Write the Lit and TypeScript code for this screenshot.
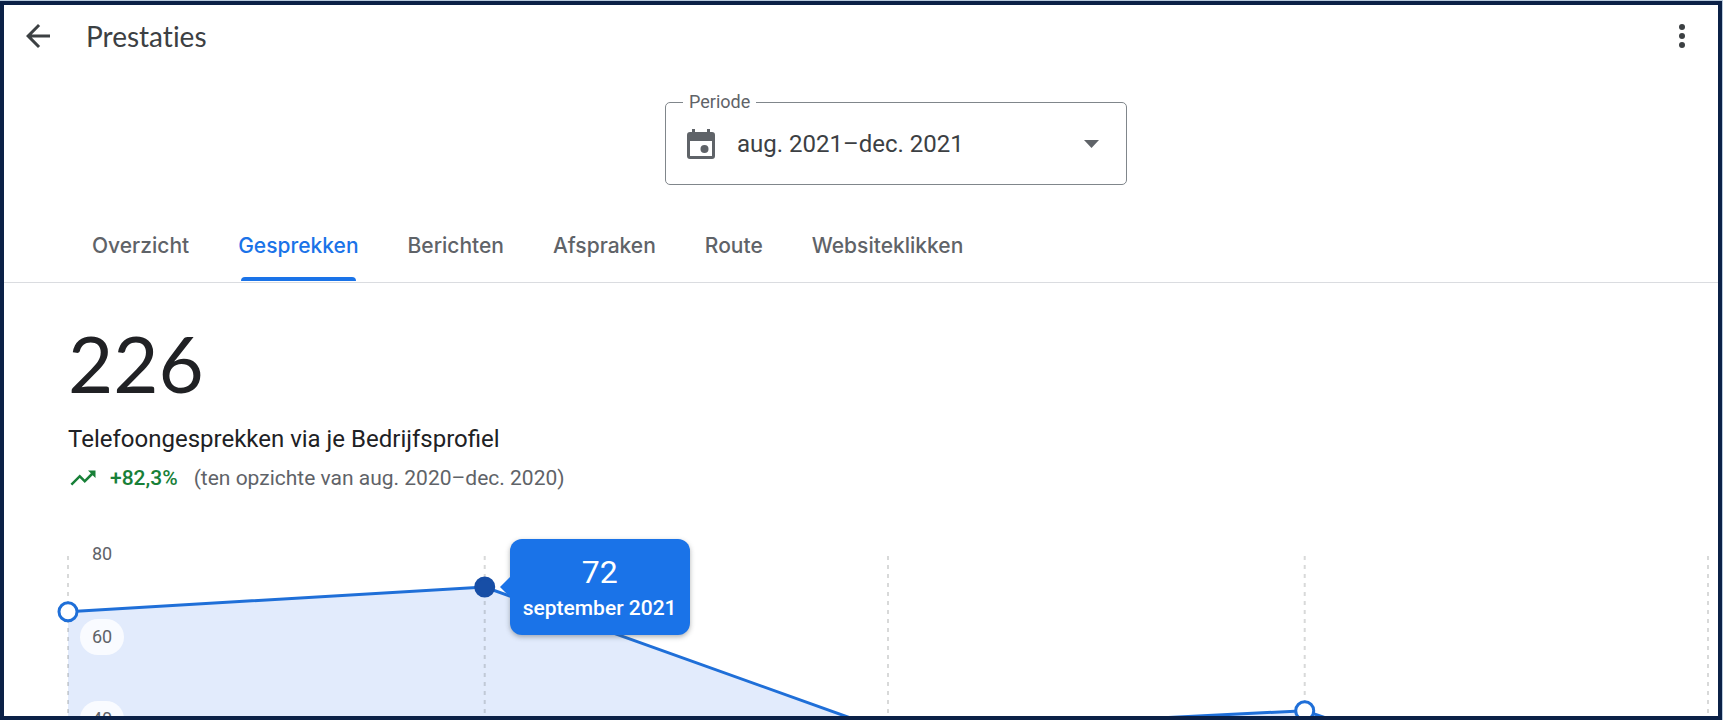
import { LitElement, html, css, svg } from "lit";
import { customElement, property, state } from "lit/decorators.js";
import { classMap } from "lit/directives/class-map.js";
import { styleMap } from "lit/directives/style-map.js";

interface Point {
  day: number;
  value: number;
  label: string;
}

const DAYS = 122;
const MAX = 80;

const POINTS: Point[] = [
  { day: 0, value: 66, label: "augustus 2021" },
  { day: 31, value: 72, label: "september 2021" },
  { day: 61, value: 37, label: "oktober 2021" },
  { day: 92, value: 42, label: "november 2021" },
  { day: 122, value: 9, label: "december 2021" },
];

const TABS = ["Overzicht", "Gesprekken", "Berichten", "Afspraken", "Route", "Websiteklikken"];

@customElement("calls-chart")
export class CallsChart extends LitElement {
  @property({ attribute: false }) points: Point[] = [];
  @state() private selected = 1;

  static styles = css`
    :host {
      display: block;
      position: relative;
      height: 330px;
      font-family: Roboto, sans-serif;
    }
    .plot,
    .series {
      display: block;
      width: 100%;
      height: 100%;
      overflow: visible;
    }
    .grid {
      stroke: rgba(60, 64, 67, 0.2);
      stroke-width: 2;
      stroke-dasharray: 4 5;
    }
    .area {
      fill: #e2ebfc;
    }
    .line {
      fill: none;
      stroke: #1f6fd8;
      stroke-width: 3;
      vector-effect: non-scaling-stroke;
    }
    .dot {
      fill: #fff;
      stroke: #1f6fd8;
      stroke-width: 3;
      cursor: pointer;
    }
    .dot.active {
      fill: #174ea6;
      stroke: #174ea6;
    }
    .tick {
      position: absolute;
      left: 12px;
      padding: 0 12px;
      border-radius: 18px;
      background: rgba(255, 255, 255, 0.8);
      color: #5f6368;
      font-size: 18px;
      line-height: 36px;
      transform: translateY(-50%);
    }
    .tooltip {
      position: absolute;
      box-sizing: border-box;
      margin-left: 25px;
      padding: 12px 13px;
      border-radius: 12px;
      background: #1a73e8;
      box-shadow: 0 2px 5px rgba(60, 64, 67, 0.4);
      color: #fff;
      text-align: center;
      white-space: nowrap;
      transform: translateY(-50%);
    }
    .tooltip::before {
      content: "";
      position: absolute;
      left: -10px;
      top: 50%;
      margin-top: -10px;
      border: 10px solid transparent;
      border-left-width: 0;
      border-right-color: #1a73e8;
    }
    .value {
      font-size: 32px;
      line-height: 42px;
    }
    .month {
      font-size: 21px;
      font-weight: 500;
      line-height: 30px;
    }
  `;

  render() {
    const x = (p: Point) => `${(p.day / DAYS) * 100}%`;
    const y = (v: number) => `${(1 - v / MAX) * 100}%`;
    const coords = this.points.map((p) => `${p.day},${MAX - p.value}`).join(" ");
    const current = this.points[this.selected];
    return html`
      <svg class="plot" role="img" aria-label="Telefoongesprekken per maand">
        <svg class="series" viewBox="0 0 ${DAYS} ${MAX}" preserveAspectRatio="none">
          <polygon class="area" points="0,${MAX} ${coords} ${DAYS},${MAX}"></polygon>
        </svg>
        ${this.points.map((p) => svg`<line class="grid" x1=${x(p)} x2=${x(p)} y1="2" y2="100%"></line>`)}
        <svg class="series" viewBox="0 0 ${DAYS} ${MAX}" preserveAspectRatio="none">
          <polyline class="line" points=${coords}></polyline>
        </svg>
        ${this.points.map(
          (p, i) => svg`<circle
            class=${classMap({ dot: true, active: i === this.selected })}
            cx=${x(p)} cy=${y(p.value)} r="9"
            @click=${() => (this.selected = i)}></circle>`
        )}
      </svg>
      ${[80, 60, 40, 20].map((v) => html`<span class="tick" style=${styleMap({ top: y(v) })}>${v}</span>`)}
      ${current
        ? html`<div class="tooltip" style=${styleMap({ left: x(current), top: y(current.value) })}>
            <div class="value">${current.value}</div>
            <div class="month">${current.label}</div>
          </div>`
        : null}
    `;
  }
}

@customElement("app-root")
export class AppRoot extends LitElement {
  @state() private tab = "Gesprekken";

  static styles = css`
    :host {
      display: block;
      box-sizing: border-box;
      height: 100vh;
      padding: 1px 1px 0 0;
      background: #b9cbdd;
      color: #202124;
      font-family: Roboto, sans-serif;
    }
    .frame {
      box-sizing: border-box;
      height: 100%;
      overflow: hidden;
      border: 4px solid #0b2147;
      background: #fff;
    }
    button {
      border: 0;
      padding: 0;
      background: none;
      font: inherit;
      color: inherit;
      cursor: pointer;
    }
    svg {
      display: block;
      fill: currentColor;
    }
    .bar {
      display: flex;
      align-items: center;
      gap: 30px;
      height: 62px;
      padding: 0 18px 0 16px;
      color: #3c4043;
    }
    .bar h1 {
      flex: 1;
      margin: 0;
      font: 400 28px/36px Lato, sans-serif;
      font-variant-ligatures: none;
    }
    .picker {
      display: flex;
      justify-content: center;
      padding: 25px 0 0 70px;
    }
    .field {
      box-sizing: border-box;
      width: 462px;
      margin: 0;
      padding: 0;
      border: 1px solid #80868b;
      border-radius: 5px;
    }
    .field legend {
      margin-left: 17px;
      padding: 0 6px;
      color: #5f6368;
      font-size: 18px;
      line-height: 20px;
    }
    .control {
      display: grid;
      grid-template-columns: 50px 1fr;
      align-items: center;
      padding: 0 27px 8px 21px;
      height: 64px;
      color: #5f6368;
    }
    .control > * {
      grid-row: 1;
    }
    .calendar {
      grid-column: 1;
    }
    .control select {
      grid-column: 1 / 3;
      height: 60px;
      padding: 0 0 0 50px;
      border: 0;
      background: none;
      appearance: none;
      color: #3c4043;
      font: 400 24px/32px Roboto, sans-serif;
    }
    .caret {
      grid-column: 2;
      justify-self: end;
      pointer-events: none;
    }
    .tabs {
      display: flex;
      gap: 49px;
      margin-top: 25px;
      padding: 0 88px;
      border-bottom: 1px solid #dadce0;
      color: #5f6368;
    }
    .tab {
      position: relative;
      height: 72px;
      font: 500 21px/28px Inter, sans-serif;
    }
    .tab.active {
      color: #1a73e8;
    }
    .tab.active::after {
      content: "";
      position: absolute;
      left: 3px;
      right: 3px;
      bottom: 1px;
      height: 4px;
      border-radius: 4px 4px 0 0;
      background: #1a73e8;
    }
    .content {
      padding: 40px 10px 0 64px;
    }
    .total {
      font: 400 78px/80px Lato, sans-serif;
    }
    .caption {
      margin: 20px 0 0;
      font-size: 24px;
      font-weight: 400;
      line-height: 32px;
    }
    .trend {
      display: flex;
      align-items: center;
      gap: 12px;
      margin: 7px 0 60px;
      color: #5f6368;
      font-size: 21px;
      line-height: 32px;
    }
    .trend strong {
      padding-right: 4px;
    }
    .trend svg,
    .trend strong {
      color: #188038;
      font-weight: 500;
    }
  `;

  render() {
    return html`
      <main class="frame">
        <header class="bar">
          <button aria-label="Terug">
            <svg width="36" height="36" viewBox="0 0 24 24">
              <path d="M20 11H7.83l5.59-5.59L12 4l-8 8 8 8 1.41-1.41L7.83 13H20z"></path>
            </svg>
          </button>
          <h1>Prestaties</h1>
          <button aria-label="Meer opties">
            <svg width="36" height="36" viewBox="0 0 24 24">
              <circle cx="12" cy="6" r="2"></circle>
              <circle cx="12" cy="12" r="2"></circle>
              <circle cx="12" cy="18" r="2"></circle>
            </svg>
          </button>
        </header>

        <div class="picker">
          <fieldset class="field">
            <legend><label for="period">Periode</label></legend>
            <div class="control">
              <svg class="calendar" width="28" height="30" viewBox="0 0 28 30">
                <path
                  fill-rule="evenodd"
                  d="M5 0h3v3h12V0h3v3h2a3 3 0 0 1 3 3v21a3 3 0 0 1-3 3H3a3 3 0 0 1-3-3V6a3 3 0 0 1 3-3h2zM3 12v15h22V12z"
                ></path>
                <circle cx="17.5" cy="20" r="4"></circle>
              </svg>
              <select id="period">
                <option>aug. 2021–dec. 2021</option>
              </select>
              <svg class="caret" width="15" height="8" viewBox="0 0 15 8">
                <path d="M0 0h15L7.500 8z"></path>
              </svg>
            </div>
          </fieldset>
        </div>

        <nav class="tabs" role="tablist">
          ${TABS.map(
            (name) => html`<button
              role="tab"
              class=${classMap({ tab: true, active: name === this.tab })}
              aria-selected=${name === this.tab}
              @click=${() => (this.tab = name)}
            >${name}</button>`
          )}
        </nav>

        <section class="content">
          <div class="total">226</div>
          <h2 class="caption">Telefoongesprekken via je Bedrijfsprofiel</h2>
          <p class="trend">
            <svg width="30" height="30" viewBox="0 0 24 24">
              <path d="M16 6l2.290 2.290-4.880 4.880-4-4L2 16.590 3.410 18l6-6 4 4 6.300-6.290L22 12V6z"></path>
            </svg>
            <strong>+82,3%</strong>
            <span>(ten opzichte van aug. 2020–dec. 2020)</span>
          </p>
          <calls-chart .points=${POINTS}></calls-chart>
        </section>
      </main>
    `;
  }
}
